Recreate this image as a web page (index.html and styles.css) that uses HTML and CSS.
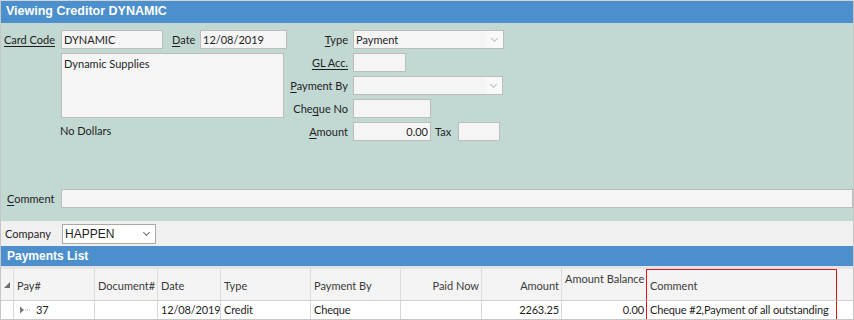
FILE: index.html
```html
<!DOCTYPE html>
<html lang="en">
<head>
    <meta charset="UTF-8">
    <title>Viewing Creditor DYNAMIC</title>
    <link rel="stylesheet" href="styles.css">
</head>
<body>
    <div class="window">
        <div class="title-bar">Viewing Creditor DYNAMIC</div>

        <div class="form-area">
            <div class="form-top">
                <div class="left-block">
                    <div class="row">
                        <label class="lbl lbl-card"><u>Card Code</u></label>
                        <div class="field w-card">DYNAMIC</div>
                        <label class="lbl lbl-date"><u>D</u>ate</label>
                        <div class="field w-date">12/08/2019</div>
                    </div>
                    <div class="field address">Dynamic Supplies</div>
                    <div class="words">No Dollars</div>
                </div>

                <div class="right-block">
                    <label class="lbl-r"><u>T</u>ype</label>
                    <div class="field combo w-type">Payment<span class="arrow"></span></div>

                    <label class="lbl-r"><u>GL Acc.</u></label>
                    <div class="field w-gl"></div>

                    <label class="lbl-r"><u>P</u>ayment By</label>
                    <div class="field combo w-payby"><span class="arrow"></span></div>

                    <label class="lbl-r">Che<u>q</u>ue No</label>
                    <div class="field w-cheque"></div>

                    <label class="lbl-r"><u>A</u>mount</label>
                    <div class="amount-row">
                        <div class="field num w-amount">0.00</div>
                        <span class="lbl-tax">Tax</span>
                        <div class="field w-tax"></div>
                    </div>
                </div>
            </div>

            <div class="comment-row">
                <label class="lbl lbl-comment"><u>C</u>omment</label>
                <div class="field comment-field"></div>
            </div>
        </div>

        <div class="company-row">
            <label class="lbl-company">Company</label>
            <div class="field combo company-field">HAPPEN<span class="arrow dark"></span></div>
        </div>

        <div class="section-bar">Payments List</div>

        <table class="grid">
            <colgroup>
                <col style="width:13px">
                <col style="width:81px">
                <col style="width:63px">
                <col style="width:63px">
                <col style="width:90px">
                <col style="width:90px">
                <col style="width:81px">
                <col style="width:80px">
                <col style="width:84px">
                <col style="width:191px">
                <col>
            </colgroup>
            <thead>
                <tr>
                    <th class="ind"><span class="corner"></span></th>
                    <th>Pay#</th>
                    <th>Document#</th>
                    <th>Date</th>
                    <th>Type</th>
                    <th>Payment By</th>
                    <th class="right">Paid Now</th>
                    <th class="right">Amount</th>
                    <th class="top before-comment">Amount Balance</th>
                    <th class="comment">Comment</th>
                    <th class="filler"></th>
                </tr>
            </thead>
            <tbody>
                <tr>
                    <td class="ind"></td>
                    <td class="pay">
                        <svg class="expand" width="14" height="10" viewBox="0 0 14 10">
                            <path d="M1 1.5 L5 5 L1 8.5 Z" fill="#7a7a7a"/>
                            <path d="M6 5 H12" stroke="#a8a8a8" stroke-width="1" stroke-dasharray="1 1"/>
                        </svg>
                        <span class="pay-no">37</span>
                    </td>
                    <td></td>
                    <td>12/08/2019</td>
                    <td>Credit</td>
                    <td>Cheque</td>
                    <td class="right"></td>
                    <td class="right">2263.25</td>
                    <td class="right before-comment">0.00</td>
                    <td class="comment">Cheque #2,Payment of all outstanding</td>
                    <td class="filler"></td>
                </tr>
            </tbody>
        </table>
    </div>
</body>
</html>
```

FILE: styles.css
```css
* {
    box-sizing: border-box;
}
body {
    margin: 0;
    font-family: Lato, "Noto Sans", sans-serif;
    font-size: 11px;
    color: #1e1e1e;
    background: #ffffff;
}
.window {
    width: 854px;
    height: 320px;
    border: 1px solid #c6c6c6;
    border-top-color: #d4d4d4;
    background: #f0f0f0;
    overflow: hidden;
}
.title-bar {
    height: 22px;
    line-height: 21px;
    padding-left: 5px;
    background: #4b8fcc;
    color: #ffffff;
    font-family: "Liberation Sans", Arial, sans-serif;
    font-weight: bold;
    font-size: 12.5px;
}
.form-area {
    height: 198px;
    background: #c2d8d2;
    display: flex;
    flex-direction: column;
    padding-top: 7px;
}
.form-top {
    display: flex;
}
.field {
    height: 19px;
    line-height: 17px;
    padding: 0 2px;
    background: #f5f5f5;
    border: 1px solid #bdbdbd;
    white-space: nowrap;
    overflow: hidden;
}
.lbl {
    line-height: 19px;
}
u {
    text-decoration-thickness: 1px;
    text-underline-offset: 2px;
}
.left-block {
    width: 286px;
    padding-left: 3px;
}
.row {
    display: flex;
}
.lbl-card {
    width: 57px;
}
.w-card {
    width: 102px;
}
.lbl-date {
    width: 28px;
    margin-left: 9px;
}
.w-date {
    width: 87px;
}
.address {
    width: 223px;
    height: 65px;
    margin: 4px 0 0 57px;
    padding-top: 1px;
}
.words {
    margin: 6px 0 0 56px;
}
.right-block {
    display: grid;
    grid-template-columns: 61px auto;
    column-gap: 5px;
    row-gap: 4px;
    align-content: start;
    justify-items: start;
}
.lbl-r {
    justify-self: end;
    line-height: 19px;
    white-space: nowrap;
}
.combo {
    position: relative;
    padding-right: 18px;
}
.arrow {
    position: absolute;
    right: 0;
    top: 0;
    width: 16px;
    height: 17px;
    background: #f9f9f9;
}
.arrow::after {
    content: "";
    position: absolute;
    left: 5px;
    top: 5px;
    width: 4px;
    height: 4px;
    border-right: 1.5px solid #bdbdbd;
    border-bottom: 1.5px solid #bdbdbd;
    transform: rotate(45deg);
}
.arrow.dark {
    background: transparent;
}
.arrow.dark::after {
    border-color: #707070;
}
.w-type {
    width: 151px;
}
.w-gl {
    width: 53px;
}
.w-payby {
    width: 150px;
}
.w-cheque {
    width: 78px;
}
.amount-row {
    display: flex;
    align-items: center;
}
.num {
    text-align: right;
}
.w-amount {
    width: 78px;
}
.lbl-tax {
    margin: 0 7px 0 4px;
}
.w-tax {
    width: 42px;
}
.comment-row {
    display: flex;
    margin-top: auto;
    margin-bottom: 13px;
    padding-left: 6px;
}
.lbl-comment {
    width: 54px;
}
.comment-field {
    flex: 1;
}
.company-row {
    display: flex;
    align-items: center;
    height: 25px;
    padding-left: 4px;
}
.lbl-company {
    width: 57px;
}
.company-field {
    width: 94px;
    height: 20px;
    line-height: 18px;
    background: #ffffff;
    border-color: #a9a9a9;
    font-family: "Liberation Sans", Arial, sans-serif;
    font-size: 12px;
}
.section-bar {
    height: 23px;
    line-height: 20px;
    padding-left: 6px;
    background: #4b8fcc;
    color: #ffffff;
    font-family: "Liberation Sans", Arial, sans-serif;
    font-weight: bold;
    font-size: 12px;
    border-bottom: 3px solid #e4e4e4;
}
.grid {
    width: 852px;
    table-layout: fixed;
    border-collapse: separate;
    border-spacing: 0;
    background: #ffffff;
}
.grid th,
.grid td {
    border-right: 1px solid #d6d6d6;
    border-bottom: 1px solid #d6d6d6;
    padding: 0 2px 0 3px;
    white-space: nowrap;
    overflow: hidden;
    text-align: left;
}
.grid th {
    height: 32px;
    padding-top: 1px;
    background: #f4f4f4;
    font-weight: normal;
    color: #3a3a3a;
    border-right-color: #dcdcdc;
    border-bottom-color: #d2d2d2;
}
.grid td {
    height: 19px;
    padding-bottom: 1px;
    color: #1e1e1e;
    letter-spacing: -0.15px;
}
.grid .right {
    text-align: right;
}
.grid th.top {
    vertical-align: top;
    padding-top: 3px;
    text-align: right;
}
.grid .before-comment {
    border-right: none;
}
.grid .comment {
    border-left: 1px solid #d8141c;
    border-right: 1px solid #d8141c;
}
.grid th.comment {
    border-top: 1px solid #d8141c;
}
.grid td.comment {
    border-bottom: 1px solid #d8141c;
}
.grid .filler {
    border-right: none;
}
.grid .ind {
    position: relative;
}
.corner {
    position: absolute;
    left: 3px;
    top: 13px;
    width: 0;
    height: 0;
    border-left: 6px solid transparent;
    border-bottom: 6px solid #6e6e6e;
}
.pay {
    position: relative;
}
.expand {
    position: absolute;
    left: 5px;
    top: 4px;
}
.pay-no {
    display: inline-block;
    padding-left: 19px;
}
```
